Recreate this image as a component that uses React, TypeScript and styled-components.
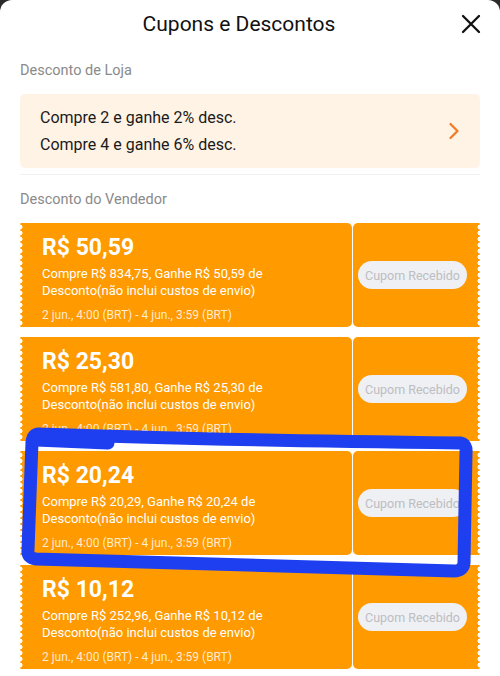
import React from "react";
import styled, { createGlobalStyle } from "styled-components";

const GlobalStyle = createGlobalStyle`
    html, body {
        margin: 0;
        padding: 0;
        background: #2a2a2a;
    }
    body {
        font-family: Roboto, "Noto Sans", "Liberation Sans", sans-serif;
    }
`;

const Sheet = styled.div`
    position: relative;
    width: 500px;
    height: 676px;
    overflow: hidden;
    background: #ffffff;
    border-radius: 12px 12px 0 0;
`;

const Header = styled.div`
    position: relative;
    display: flex;
    align-items: center;
    justify-content: center;
    height: 48px;
    padding-right: 22px;
`;

const Title = styled.h1`
    margin: 0;
    font-size: 21px;
    font-weight: 400;
    color: #111111;
`;

const CloseButton = styled.button`
    position: absolute;
    right: 18px;
    top: 13px;
    width: 22px;
    height: 22px;
    padding: 0;
    border: none;
    background: none;
    display: flex;
    align-items: center;
    justify-content: center;
`;

const Body = styled.div`
    display: flex;
    flex-direction: column;
    padding: 0 20px;
`;

const SectionLabel = styled.div`
    font-size: 14.5px;
    color: #8a8a8a;
    line-height: 20px;
    padding: ${(p: { $top: number }) => p.$top}px 0 13px;
`;

const StoreBox = styled.div`
    display: flex;
    align-items: center;
    justify-content: space-between;
    height: 74px;
    padding: 0 20px;
    background: #fff3e5;
    border-radius: 5px;
`;

const StoreLines = styled.div`
    display: flex;
    flex-direction: column;
    font-size: 16px;
    line-height: 27px;
    color: #1a1a1a;
`;

const Divider = styled.div`
    height: 1px;
    margin-top: 6px;
    background: #eef0f4;
`;

const CouponList = styled.div`
    display: flex;
    flex-direction: column;
    gap: 10px;
`;

const Coupon = styled.div`
    display: flex;
    gap: 1px;
    height: 104px;
`;

const Scallop = `
    content: "";
    position: absolute;
    top: 0;
    bottom: 0;
    width: 6px;
    background: radial-gradient(circle, #ffffff 2.2px, transparent 2.8px) 0 1px / 6px 6px repeat-y;
`;

const CouponMain = styled.div`
    position: relative;
    flex: 1;
    display: flex;
    flex-direction: column;
    padding: 10px 0 0 22px;
    background: #ff9a00;
    border-radius: 0 5px 5px 0;
    color: #ffffff;

    &::before {
        ${Scallop}
        left: -3px;
    }
`;

const CouponSide = styled.div`
    position: relative;
    width: 127px;
    display: flex;
    align-items: center;
    padding-left: 5px;
    box-sizing: border-box;
    background: #ff9a00;
    border-radius: 5px 0 0 5px;

    &::after {
        ${Scallop}
        right: -3px;
    }
`;

const Amount = styled.div`
    font-size: 23px;
    font-weight: 700;
    line-height: 30px;
`;

const Description = styled.div`
    font-size: 13px;
    line-height: 17px;
    margin-top: 2px;
`;

const Validity = styled.div`
    font-size: 12px;
    line-height: 16px;
    margin-top: 8px;
    color: rgba(255, 255, 255, 0.82);
`;

const ReceivedButton = styled.button`
    width: 109px;
    height: 28px;
    padding: 0;
    border: none;
    border-radius: 14px;
    background: #eff0f3;
    color: #bdbdc2;
    font-family: inherit;
    font-size: 12.5px;
    white-space: nowrap;
`;

const Marker = styled.svg`
    position: absolute;
    left: 0;
    top: 0;
    pointer-events: none;
`;

const coupons = [
    { amount: "50,59", min: "834,75" },
    { amount: "25,30", min: "581,80" },
    { amount: "20,24", min: "20,29" },
    { amount: "10,12", min: "252,96" },
];

const App: React.FC = () => {
    return (
        <Sheet>
            <GlobalStyle />
            <Header>
                <Title>Cupons e Descontos</Title>
                <CloseButton>
                    <svg width="20" height="20" viewBox="0 0 20 20">
                        <path d="M2 2 L18 18 M18 2 L2 18" stroke="#111" strokeWidth="2.3" strokeLinecap="round" />
                    </svg>
                </CloseButton>
            </Header>
            <Body>
                <SectionLabel $top={13}>Desconto de Loja</SectionLabel>
                <StoreBox>
                    <StoreLines>
                        <span>Compre 2 e ganhe 2% desc.</span>
                        <span>Compre 4 e ganhe 6% desc.</span>
                    </StoreLines>
                    <svg width="12" height="18" viewBox="0 0 12 18">
                        <path d="M2.5 2 L9.5 9 L2.5 16" fill="none" stroke="#f07c28" strokeWidth="2.3" strokeLinecap="round" strokeLinejoin="round" />
                    </svg>
                </StoreBox>
                <Divider />
                <SectionLabel $top={15}>Desconto do Vendedor</SectionLabel>
                <CouponList>
                    {coupons.map((c) => (
                        <Coupon key={c.amount}>
                            <CouponMain>
                                <Amount>R$ {c.amount}</Amount>
                                <Description>
                                    Compre R$ {c.min}, Ganhe R$ {c.amount} de
                                    <br />
                                    Desconto(não inclui custos de envio)
                                </Description>
                                <Validity>2 jun., 4:00 (BRT) - 4 jun., 3:59 (BRT)</Validity>
                            </CouponMain>
                            <CouponSide>
                                <ReceivedButton>Cupom Recebido</ReceivedButton>
                            </CouponSide>
                        </Coupon>
                    ))}
                </CouponList>
            </Body>
            <Marker width="500" height="676" viewBox="0 0 500 676">
                <g fill="none" stroke="#1e3ff0" strokeWidth="13" strokeLinejoin="round" strokeLinecap="round">
                    <path d="M40 434 C120 437 300 441 460 443 Q467 444 466 453 L464 563 Q463 571 454 571 L36 559 Q27 558 28 550 L32 442 Q33 433 40 434 Z" />
                    <path d="M36 440 L108 443" />
                </g>
            </Marker>
        </Sheet>
    );
};

export default App;
